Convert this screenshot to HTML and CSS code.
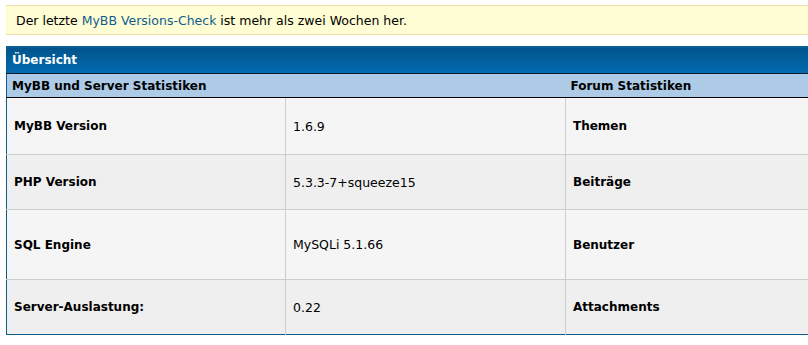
FILE: index.html
```html
<!DOCTYPE html>
<html lang="de">
<head>
    <meta charset="UTF-8">
    <title>Übersicht - MyBB Admin</title>
    <link rel="stylesheet" href="styles.css">
</head>
<body>
    <div class="notice">Der letzte <a href="#">MyBB Versions-Check</a> ist mehr als zwei Wochen her.</div>
    <table class="general">
        <colgroup>
            <col class="c1"><col class="c2"><col class="c3"><col class="c4">
        </colgroup>
        <thead>
            <tr><th class="thead" colspan="4">Übersicht</th></tr>
            <tr class="tcat">
                <td colspan="2">MyBB und Server Statistiken</td>
                <td colspan="2">Forum Statistiken</td>
            </tr>
        </thead>
        <tbody>
            <tr class="row1 h1">
                <td class="label">MyBB Version</td><td>1.6.9</td>
                <td class="label">Themen</td><td></td>
            </tr>
            <tr class="row2 h2">
                <td class="label">PHP Version</td><td>5.3.3-7+squeeze15</td>
                <td class="label">Beiträge</td><td></td>
            </tr>
            <tr class="row1 h3">
                <td class="label">SQL Engine</td><td>MySQLi 5.1.66</td>
                <td class="label">Benutzer</td><td></td>
            </tr>
            <tr class="row2 h4">
                <td class="label">Server-Auslastung:</td><td>0.22</td>
                <td class="label">Attachments</td><td></td>
            </tr>
        </tbody>
    </table>
</body>
</html>
```

FILE: styles.css
```css
body {
    margin: 0;
    padding: 5px 0 0 6px;
    background: #fff;
    font-family: "DejaVu Sans", Verdana, sans-serif;
    font-size: 12.5px;
    color: #000;
    overflow: hidden;
}
.notice {
    width: 1000px;
    height: 28px;
    line-height: 29px;
    padding-left: 10px;
    background: #fffdd3;
    border-top: 1px solid #eedfa6;
    border-bottom: 1px solid #eedfa6;
}
.notice a { color: #0f5c8e; text-decoration: none; }

.general {
    margin-top: 11px;
    width: 1100px;
    table-layout: fixed;
    border-collapse: collapse;
    border: 1px solid #0f5c8e;
}
.c1 { width: 279px; }
.c2 { width: 280px; }
.c3 { width: 280px; }

.thead {
    height: 26px;
    padding: 0 5px;
    text-align: left;
    color: #fff;
    font-size: 12px;
    background: linear-gradient(#02538b, #026cb1);
    border-bottom: 1px solid #0a1a28;
}
.tcat td {
    height: 23px;
    padding: 0 5px;
    font-size: 12px;
    font-weight: bold;
    background: #adcbe7;
    border-bottom: 1px solid #000;
}
tbody td {
    padding: 0 7px;
    border-right: 1px solid #ccc;
    border-bottom: 1px solid #ccc;
    vertical-align: middle;
}
tbody tr:last-child td { border-bottom: none; }
.row1 td { background: #f5f5f5; }
.row2 td { background: #efefef; }
.label { font-weight: bold; font-size: 12px; }
.h1 td { height: 56px; }
.h2 td { height: 54px; }
.h3 td { height: 69px; }
.h4 td { height: 54px; }
```
